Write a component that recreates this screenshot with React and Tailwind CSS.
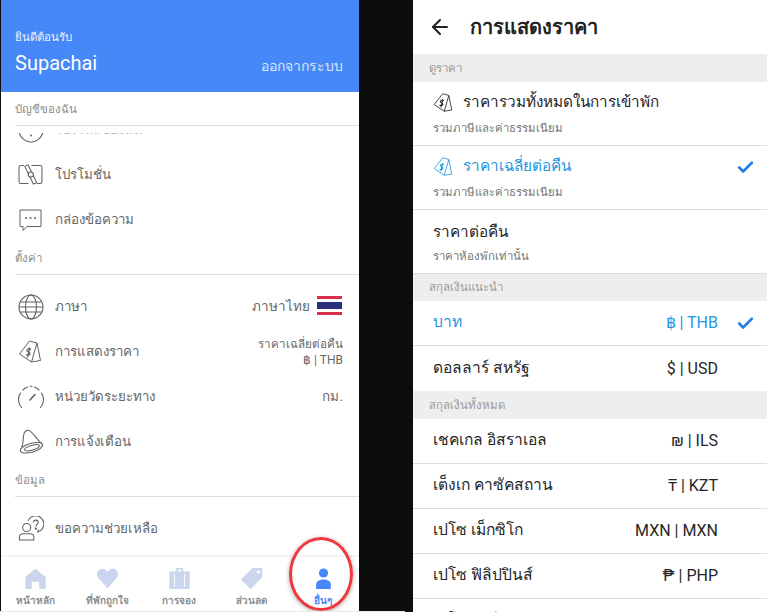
import React from "react";
import { ArrowLeft, Check } from "lucide-react";

const PriceTag = ({ className }) => (
  <svg viewBox="0 0 24 24" fill="none" stroke="currentColor" strokeWidth="1" strokeLinejoin="round" className={className}>
    <path d="M11.500 1.500 L19 3.500 L22.500 21 L13.500 22.500 L1.500 14.500 Z" />
    <path d="M19 3.500 L13.500 22.500" />
    <path
      d="M13 10c-1.300-1.100-3.800-.9-4.100.8-.3 1.800 3.400 1.500 3.100 3.500-.3 1.500-2.700 1.800-4.200.7M11.800 7.800l-2.300 10"
      strokeWidth="1.300"
    />
  </svg>
);

const PromoIcon = () => (
  <svg viewBox="0 0 26 22" fill="none" stroke="#616161" strokeWidth="1.100" className="w-[25px] h-[21px]">
    <path d="M6 1.500H3Q1 1.500 1 3.500V18.500Q1 20.500 3 20.500H11M14 1.500H23Q25 1.500 25 3.500V18.500Q25 20.500 23 20.500H20" />
    <path d="M7 2.500L10.500 1L19.500 19.500L16 21Z" />
    <circle cx="13.300" cy="11" r="2.700" fill="white" />
  </svg>
);

const ChatIcon = () => (
  <svg viewBox="0 0 24 24" fill="none" stroke="#616161" strokeWidth="1" className="w-[24px] h-[24px]">
    <path d="M2 2H23V18.500H9L5 22.500V18.500H2Z" />
    <circle cx="8" cy="10" r="1" fill="#616161" stroke="none" />
    <circle cx="12.500" cy="10" r="1" fill="#616161" stroke="none" />
    <circle cx="17" cy="10" r="1" fill="#616161" stroke="none" />
  </svg>
);

const GlobeIcon = () => (
  <svg viewBox="0 0 26 26" fill="none" stroke="#616161" strokeWidth="1.100" className="w-[26px] h-[26px]">
    <circle cx="13" cy="13" r="12" />
    <ellipse cx="13" cy="13" rx="5.500" ry="12" />
    <path d="M1 13H25M2.500 8H23.500M2.500 18H23.500" />
  </svg>
);

const GaugeIcon = () => (
  <svg viewBox="0 0 26 24" fill="none" stroke="#616161" strokeWidth="1.100" strokeLinecap="round" className="w-[26px] h-[24px]">
    <path d="M3.500 22.500A12 12 0 0 1 2.500 8M5 5A12 12 0 0 1 9.500 2M12 1.200H14M16.500 2A12 12 0 0 1 21 5M23.500 8A12 12 0 0 1 22.500 22.500" />
    <path d="M12 15L17 9.500" strokeWidth="1.600" />
  </svg>
);

const ProfileIcon = () => (
  <svg viewBox="0 0 26 26" fill="none" stroke="#616161" strokeWidth="1.100" className="w-[26px] h-[26px]">
    <circle cx="13" cy="13" r="12" />
    <circle cx="13" cy="18.500" r="1" fill="#616161" stroke="none" />
  </svg>
);

const BellIcon = () => (
  <svg viewBox="0 0 26 26" fill="none" stroke="#616161" strokeWidth="1.100" className="w-[26px] h-[25px]">
    <path d="M3 19C6 15 4 9 6 4C7 1 11 0.500 13 3C17 6 19 11 24 15" />
    <ellipse cx="13.500" cy="19.500" rx="12" ry="4.600" transform="rotate(-16 13.500 19.500)" />
    <ellipse cx="14" cy="19.500" rx="8" ry="2.400" transform="rotate(-16 14 19.500)" />
  </svg>
);

const HelpIcon = () => (
  <svg viewBox="0 0 26 26" fill="none" stroke="#616161" strokeWidth="1.100" className="w-[26px] h-[25px]">
    <circle cx="8.500" cy="12" r="4.200" />
    <path d="M1 25V22Q1 18.500 5 18.500H12Q16 18.500 16 22V25Z" />
    <path d="M10 5A8.500 8.500 0 1 1 20 16.500L21 14" />
    <path d="M15.500 6.500C15.700 3.500 20.500 3.500 20.500 6.600C20.500 8.700 18 8.700 18 11" />
    <circle cx="18" cy="13.200" r="0.600" fill="#616161" />
  </svg>
);

const ThaiFlag = () => (
  <div className="w-[25px] h-[19px] mr-px -mt-[3px] flex flex-col shrink-0">
    <div className="h-[3px] bg-[#d9304d]" />
    <div className="h-[3px] bg-white" />
    <div className="h-[7px] bg-[#2a2f7c]" />
    <div className="h-[3px] bg-white" />
    <div className="h-[3px] bg-[#d9304d]" />
  </div>
);

const SectionLabel = ({ text }) => (
  <div className="ml-[14px] h-[33px] pt-[2px] flex items-center border-b border-[#dddddd] text-[11.500px] text-[#8c8c8c]">
    {text}
  </div>
);

const MenuRow = ({ icon, label, children }) => (
  <div className="h-[45px] shrink-0 flex items-center pl-[17px] pr-[16px] text-[13.300px] text-[#666666]">
    <div className="w-[37px] shrink-0 flex items-center">{icon}</div>
    <span>{label}</span>
    <div className="ml-auto flex items-center">{children}</div>
  </div>
);

const navItems = [
  {
    label: "หน้าหลัก",
    icon: <path d="M12 2L23 11V24H16V16H8V24H1V11Z" strokeLinejoin="round" />,
  },
  {
    label: "ที่พักถูกใจ",
    icon: <path d="M12 23L2 12C-1 8 1 2 6.500 2C9 2 11 3.500 12 5.500C13 3.500 15 2 17.500 2C23 2 25 8 22 12Z" />,
  },
  {
    label: "การจอง",
    icon: <path fillRule="evenodd" d="M8 1H16V5H23V24H1V5H8ZM10 3V5H14V3ZM6 7V22H7V7ZM17 7V22H18V7Z" />,
  },
  {
    label: "ส่วนลด",
    icon: <path fillRule="evenodd" d="M13 1H23.500V11.500L11 24L0.500 13.500ZM19.500 3.500A1.800 1.800 0 1 0 19.501 3.500Z" />,
  },
];

const LeftPanel = () => (
  <div className="relative w-[358px] ml-px h-[612px] bg-white flex flex-col overflow-hidden shrink-0">
    <div className="h-[92px] shrink-0 bg-[#4688f8] text-white flex flex-col justify-end pl-[14px] pr-[16px] pb-[16px]">
      <div className="text-[11.500px] leading-[16px] opacity-90 mb-[6px]">ยินดีต้อนรับ</div>
      <div className="flex items-end justify-between">
        <span className="text-[20px] leading-[25px]">Supachai</span>
        <span className="text-[14px] leading-[20px] opacity-80">ออกจากระบบ</span>
      </div>
    </div>

    <div className="pt-px">
      <SectionLabel text="บัญชีของฉัน" />
    </div>

    <div className="relative h-[26px] shrink-0 overflow-hidden flex flex-col justify-end">
      <MenuRow icon={<ProfileIcon />} label={<span className="text-[#bbbbbb]">โปรไฟล์ของฉัน</span>} />
      <div className="absolute inset-x-0 top-0 h-[7px] bg-white" />
    </div>
    <MenuRow icon={<PromoIcon />} label="โปรโมชั่น" />
    <MenuRow icon={<ChatIcon />} label="กล่องข้อความ" />

    <SectionLabel text="ตั้งค่า" />
    <div className="h-[9px] shrink-0" />
    <MenuRow icon={<GlobeIcon />} label="ภาษา">
      <span className="mr-[7px] text-[13.500px]">ภาษาไทย</span>
      <ThaiFlag />
    </MenuRow>
    <MenuRow icon={<PriceTag className="w-[24px] h-[25px] text-[#616161]" />} label="การแสดงราคา">
      <div className="text-right text-[11.600px] leading-[16px]">
        <div>ราคาเฉลี่ยต่อคืน</div>
        <div className="text-[12px]">฿ | THB</div>
      </div>
    </MenuRow>
    <MenuRow icon={<GaugeIcon />} label="หน่วยวัดระยะทาง">
      <span className="text-[13.500px]">กม.</span>
    </MenuRow>
    <MenuRow icon={<BellIcon />} label="การแจ้งเตือน" />

    <SectionLabel text="ข้อมูล" />
    <div className="h-[9px] shrink-0" />
    <MenuRow icon={<HelpIcon />} label="ขอความช่วยเหลือ" />

    <div className="mt-auto h-[57px] shrink-0 w-[360px] -ml-[2px] bg-white border-t-2 border-[#f4f4f4] grid grid-cols-5">
      {navItems.map((item) => (
        <div key={item.label} className="flex flex-col items-center pt-[10px] text-[#c9d6ed]">
          <svg viewBox="0 0 24 25" fill="currentColor" className="w-[23px] h-[23px]">{item.icon}</svg>
          <span className="mt-[4px] text-[10px] leading-[14px] font-bold text-[#8f8f8f]">{item.label}</span>
        </div>
      ))}
      <div className="flex flex-col items-center pt-[10px] text-[#4688f8]">
        <svg viewBox="0 0 24 25" fill="currentColor" className="w-[23px] h-[23px]">
          <circle cx="12" cy="6.500" r="5" />
          <path d="M4 24V19C4 15 8 13.500 12 13.500C16 13.500 20 15 20 19V24Z" />
        </svg>
        <span className="mt-[4px] text-[10px] leading-[14px] font-bold">อื่นๆ</span>
      </div>
    </div>

    <div className="absolute left-[288px] top-[537px] w-[64px] h-[74px] rounded-[50%] border-[3px] border-[#f0393c] shadow-[0_1px_4px_rgba(0,0,0,0.35)]" />
  </div>
);

const GroupHeader = ({ text }) => (
  <div className="h-[27.500px] shrink-0 flex items-center pt-px pl-[16px] bg-[#eeeeee] text-[11.500px] text-[#9a9a9a]">{text}</div>
);

const PriceOption = ({ title, sub, tag, active }) => (
  <div className={`h-[64px] shrink-0 border-b border-[#dcdcdc] pl-[20px] pr-[12px] flex items-center justify-between ${tag ? "" : "pt-[2px]"}`}>
    <div>
      <div className={`flex items-center text-[15.300px] leading-[24px] ${active ? "text-[#2196e3]" : "text-[#262626]"}`}>
        {tag && <PriceTag className="w-[20px] h-[21px] mr-[10px]" />}
        {title}
      </div>
      <div className={`text-[11.400px] leading-[16px] text-[#757575] ${tag ? "mt-[6px]" : "mt-[4px]"}`}>{sub}</div>
    </div>
    {active && <Check size={19} strokeWidth={3.400} className="text-[#2580e8] -mt-[20px]" />}
  </div>
);

const CurrencyRow = ({ name, code, active, last }) => (
  <div
    className={`h-[45px] shrink-0 pl-[20px] pr-[12px] flex items-center text-[15.600px] ${last ? "" : "border-b border-[#dcdcdc]"} ${
      active ? "text-[#2196e3]" : "text-[#262626]"
    }`}
  >
    <span>{name}</span>
    <span className="ml-auto text-[16px]">{code}</span>
    <div className="w-[37px] flex justify-end">
      {active && <Check size={19} strokeWidth={3.400} className="text-[#2580e8]" />}
    </div>
  </div>
);

const RightPanel = () => (
  <div className="ml-[54px] flex-1 h-[612px] bg-white flex flex-col overflow-hidden">
    <div className="h-[54px] shrink-0 flex items-center pl-[15px] text-[#212121]">
      <ArrowLeft size={24} strokeWidth={2} />
      <span className="ml-[18px] text-[20px] font-bold">การแสดงราคา</span>
    </div>
    <GroupHeader text="ดูราคา" />
    <PriceOption tag title="ราคารวมทั้งหมดในการเข้าพัก" sub="รวมภาษีและค่าธรรมเนียม" />
    <PriceOption tag active title="ราคาเฉลี่ยต่อคืน" sub="รวมภาษีและค่าธรรมเนียม" />
    <PriceOption title="ราคาต่อคืน" sub="ราคาห้องพักเท่านั้น" />
    <GroupHeader text="สกุลเงินแนะนำ" />
    <CurrencyRow active name="บาท" code="฿ | THB" />
    <CurrencyRow last name="ดอลลาร์ สหรัฐ" code="$ | USD" />
    <GroupHeader text="สกุลเงินทั้งหมด" />
    <CurrencyRow name="เชคเกล อิสราเอล" code="₪ | ILS" />
    <CurrencyRow name="เต็งเก คาซัคสถาน" code="₸ | KZT" />
    <CurrencyRow name="เปโซ เม็กซิโก" code="MXN | MXN" />
    <CurrencyRow name="เปโซ ฟิลิปปินส์" code="₱ | PHP" />
    <CurrencyRow name="เปโซ อาร์เจนตินา" code="ARS | ARS" />
  </div>
);

const App = () => (
  <div className="relative w-[767px] h-[612px] bg-[#0d0d0d] flex overflow-hidden font-['Roboto','Noto_Sans','Noto_Sans_CJK_SC',sans-serif]">
    <LeftPanel />
    <RightPanel />
    {/* thin white strip left over at the bottom of the screenshot */}
    <div className="absolute left-0 bottom-0 w-[405px] h-px bg-[#e8e8e8]" />
  </div>
);

export default App;
